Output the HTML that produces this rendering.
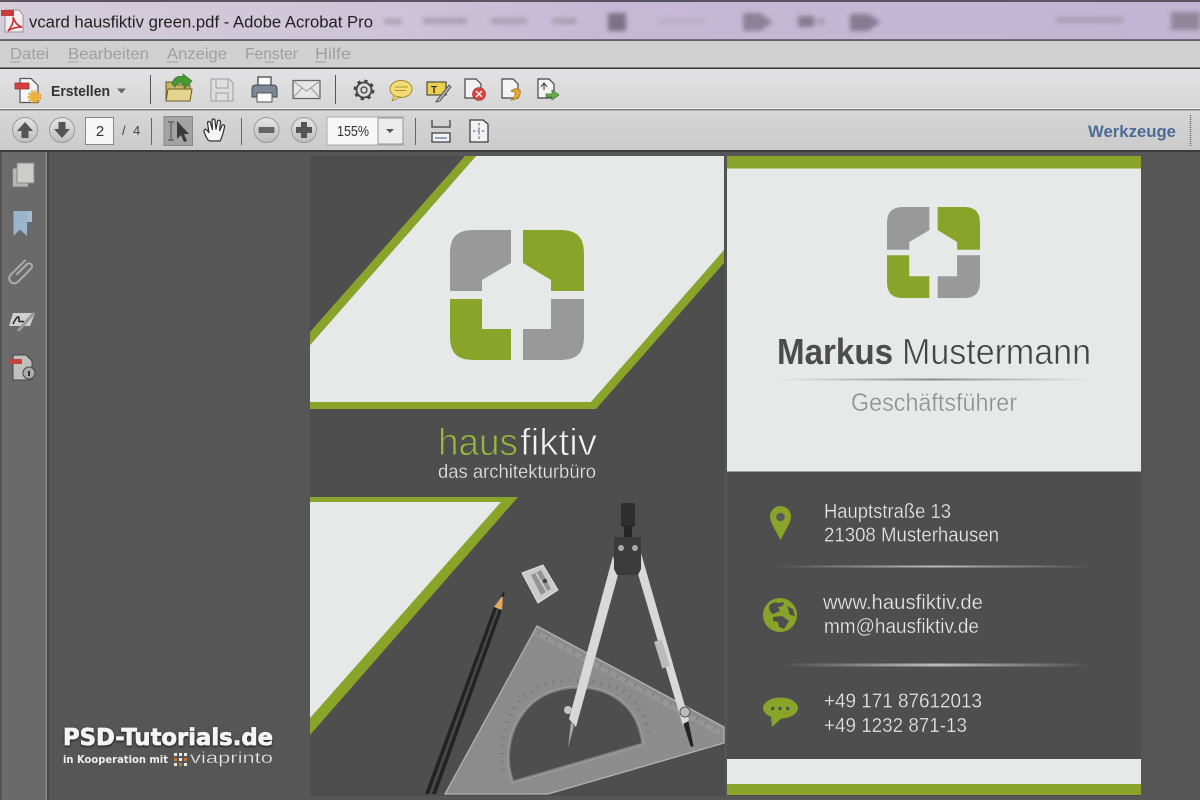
<!DOCTYPE html>
<html lang="de"><head><meta charset="utf-8"><title>vcard hausfiktiv green.pdf - Adobe Acrobat Pro</title>
<style>html,body{margin:0;padding:0;background:#565656;width:1200px;height:800px;overflow:hidden}svg{display:block}text{font-family:"Liberation Sans",sans-serif}</style></head><body>
<svg xmlns="http://www.w3.org/2000/svg" width="1200" height="800" viewBox="0 0 1200 800">
<defs>
<linearGradient id="tb" x1="0" x2="1" y1="0" y2="0"><stop offset="0" stop-color="#d3cdd8"/><stop offset=".3" stop-color="#cfc5d8"/><stop offset=".5" stop-color="#c6b9d6"/><stop offset="1" stop-color="#c2b4d4"/></linearGradient>
<linearGradient id="t1" x1="0" x2="0" y1="0" y2="1"><stop offset="0" stop-color="#e2e2e4"/><stop offset="1" stop-color="#d6d6d6"/></linearGradient>
<linearGradient id="t2" x1="0" x2="0" y1="0" y2="1"><stop offset="0" stop-color="#d6d6d6"/><stop offset="1" stop-color="#cbcbcb"/></linearGradient>
<linearGradient id="sepd" x1="0" x2="1" y1="0" y2="0"><stop offset="0" stop-color="#999" stop-opacity="0"/><stop offset=".5" stop-color="#8a8a8a"/><stop offset="1" stop-color="#999" stop-opacity="0"/></linearGradient>
<linearGradient id="sepl" x1="0" x2="1" y1="0" y2="0"><stop offset="0" stop-color="#bbb" stop-opacity="0"/><stop offset=".5" stop-color="#bdbdbd"/><stop offset="1" stop-color="#bbb" stop-opacity="0"/></linearGradient>
<linearGradient id="btn" x1="0" x2="0" y1="0" y2="1"><stop offset="0" stop-color="#e6e6e6"/><stop offset="1" stop-color="#bdbdbd"/></linearGradient>
<linearGradient id="sq" x1="0" x2="1" y1="0" y2="1"><stop offset="0" stop-color="#8a8a8a"/><stop offset="1" stop-color="#8e8e8e"/></linearGradient>
<filter id="b3" x="-30%" y="-60%" width="160%" height="220%"><feGaussianBlur stdDeviation="2.4"/></filter>
<filter id="s" x="-5%" y="-20%" width="110%" height="140%"><feDropShadow dx="0" dy="1" stdDeviation="1.2" flood-color="#111" flood-opacity=".9"/></filter>
<filter id="soft"><feGaussianBlur stdDeviation=".35"/></filter>
<g id="logo">
<path fill="#999" d="M61 0V33L32 50V61H0V24C0 7 7 0 24 0Z"/>
<path fill="#8aa429" d="M73 0V33L101 50V61H134V24C134 7 127 0 110 0Z"/>
<path fill="#8aa429" d="M0 69H32V99H61V130H24C7 130 0 123 0 106Z"/>
<path fill="#999" d="M73 99H101V69H134V106C134 123 127 130 110 130H73Z"/>
</g>
</defs>

<!-- chrome -->
<rect width="1200" height="800" fill="#565656"/>
<rect width="1200" height="39" fill="url(#tb)"/>
<rect width="1200" height="2" fill="#5b5360"/>
<g filter="url(#b3)" fill="#a89fb2">
<rect x="384" y="19" width="18" height="5"/><rect x="423" y="18" width="44" height="6"/><rect x="491" y="18" width="36" height="6"/><rect x="552" y="18" width="25" height="6"/>
<rect x="608" y="13" width="18" height="18" fill="#7a7285"/>
<rect x="658" y="19" width="48" height="5" fill="#b9afc6"/>
<path d="M743 13H760L773 22L760 31H743Z" fill="#8b8298"/>
<rect x="798" y="16" width="16" height="11" fill="#857c92"/><rect x="816" y="18" width="9" height="7" fill="#a89eb5"/>
<path d="M850 14H868L881 22L868 31H850Z" fill="#857c92"/>
<rect x="1056" y="17" width="67" height="6" fill="#a89db6"/><rect x="1171" y="12" width="29" height="18" fill="#8f8799"/>
</g>
<rect y="39" width="1200" height="1.500" fill="#6c6c78"/>
<rect y="41" width="1200" height="27" fill="#d0d0d0"/>
<rect y="67.500" width="1200" height="1.500" fill="#333"/>
<rect y="69" width="1200" height="39" fill="url(#t1)"/>
<rect y="108" width="1200" height="1" fill="#f4f4f4"/>
<rect y="109" width="1200" height="1.500" fill="#777"/>
<rect y="110.500" width="1200" height="1" fill="#eee"/>
<rect y="111" width="1200" height="39" fill="url(#t2)"/>
<rect y="150" width="1200" height="2" fill="#3c3c3c"/>

<!-- title -->
<g filter="url(#soft)">
<path d="M5 10H19L23 15V32H5Z" fill="#f1ecee" stroke="#9a8f98"/>
<rect x="1" y="10" width="13" height="6" fill="#c43a38"/>
<path d="M8 31C12 26 14 21 13 17C15 23 18 26 22 27C17 27 12 28 8 31Z" fill="none" stroke="#cc2d27" stroke-width="1.600"/>
</g>
<text x="29" y="27.500" font-size="17" fill="#222" textLength="344" lengthAdjust="spacingAndGlyphs">vcard hausfiktiv green.pdf - Adobe Acrobat Pro</text>

<!-- menu -->
<g font-size="16" fill="#9f9f9f">
<text x="10" y="59" textLength="39" lengthAdjust="spacingAndGlyphs">Datei</text>
<text x="68" y="59" textLength="81" lengthAdjust="spacingAndGlyphs">Bearbeiten</text>
<text x="167" y="59" textLength="60" lengthAdjust="spacingAndGlyphs">Anzeige</text>
<text x="245" y="59" textLength="53" lengthAdjust="spacingAndGlyphs">Fenster</text>
<text x="315" y="59" textLength="36" lengthAdjust="spacingAndGlyphs">Hilfe</text>
</g>
<g stroke="#9f9f9f" stroke-width="1"><path d="M10 62H20M68 62H78M167 62H178M265 62H274M315 62H326"/></g>

<!-- toolbar 1 -->
<g filter="url(#soft)">
<path d="M20 78.500H31L38 85.500V102.500H20Z" fill="#f4f4f4" stroke="#555" stroke-width="1.200"/>
<rect x="15" y="83" width="14" height="6" fill="#d9403c" stroke="#8c2a28" stroke-width=".7"/>
<circle cx="34.500" cy="97" r="5" fill="#eab23e"/>
<circle cx="34.500" cy="97" r="6" fill="none" stroke="#d19a2b" stroke-width="1.600" stroke-dasharray="2 1.500"/>
</g>
<text x="51" y="96" font-size="15" font-weight="bold" fill="#333" textLength="59" lengthAdjust="spacingAndGlyphs">Erstellen</text>
<path d="M117 88.500H126L121.500 93.500Z" fill="#666"/>
<rect x="150" y="75" width="1" height="29" fill="#555"/>
<g filter="url(#soft)">
<path d="M166 82H175L178 85H190V101H166Z" fill="#c9b56a" stroke="#6a5a25"/>
<path d="M166 101L168 89H192L190 101Z" fill="#e4d48e" stroke="#6a5a25"/>
<path d="M172 84Q174 75 183 76.500V74L192 81L184 89V84.500Q178 81 175 87Z" fill="#4a9a33" stroke="#2f6d20" stroke-width=".6"/>
<path d="M211 79H229L233 83V101H211Z" fill="#dedede" stroke="#aaa" stroke-width="1.300"/>
<path d="M216 79V88H228V79M216 101V93H228V101" fill="none" stroke="#aaa" stroke-width="1.200"/>
<rect x="258" y="77" width="13" height="9" fill="#fafafa" stroke="#555" stroke-width="1.400"/>
<path d="M256 85H273Q277 85 277 89V97H272V93H257V97H252V89Q252 85 256 85Z" fill="#7b8896" stroke="#3f4954"/>
<rect x="257" y="93" width="15" height="9" fill="#fafafa" stroke="#555"/>
<rect x="293" y="80.500" width="27" height="18" fill="#e6e6e6" stroke="#666" stroke-width="1.300"/>
<path d="M293 81L306.500 91L320 81M293 98L302 88M320 98L311 88" fill="none" stroke="#999"/>
</g>
<rect x="335" y="75" width="1" height="29" fill="#555"/>
<g filter="url(#soft)">
<circle cx="364" cy="90" r="7.500" fill="none" stroke="#444" stroke-width="1.800"/>
<circle cx="364" cy="90" r="9.300" fill="none" stroke="#444" stroke-width="2.200" stroke-dasharray="3.400 3.900"/>
<circle cx="364" cy="90" r="3" fill="none" stroke="#444" stroke-width="1.300"/>
<ellipse cx="401" cy="89" rx="11" ry="8.500" fill="#f3dc74" stroke="#9e8a2a"/>
<path d="M394 96L392 101L400 97Z" fill="#f3dc74" stroke="#9e8a2a" stroke-width=".8"/>
<path d="M395 87H408M395 90.500H406" stroke="#b09628"/>
<rect x="427" y="82" width="19" height="13" fill="#eccf4e" stroke="#333"/>
<text x="431" y="93" font-size="10" font-weight="bold" fill="#333">T</text>
<path d="M437 100L449 85L451 87L440 101L436 102Z" fill="#aab0b5" stroke="#444" stroke-width=".8"/>
<path d="M465 79H476L481 84V98H465Z" fill="#f3f3f3" stroke="#444" stroke-width="1.200"/>
<circle cx="479" cy="94" r="6.500" fill="#d9433f" stroke="#8c2a28" stroke-width=".6"/>
<path d="M476 91L482 97M482 91L476 97" stroke="#fff" stroke-width="1.300"/>
<path d="M502 79H513L518 84V98H502Z" fill="#f3f3f3" stroke="#444" stroke-width="1.200"/>
<path d="M511 100Q522 99 520 90Q515 87 511 91L515 92Q516 96 511 100Z" fill="#e5a832" stroke="#a17013" stroke-width=".7"/>
<path d="M538 79H549L554 84V98H538Z" fill="#f3f3f3" stroke="#444" stroke-width="1.200"/>
<path d="M544 84V90M541 87L544 83L547 87" stroke="#333" fill="none"/>
<path d="M546 94H552V90L559 95L552 100V97H546Z" fill="#69ab4a" stroke="#3c7a2a" stroke-width=".7"/>
</g>

<!-- toolbar 2 -->
<g filter="url(#soft)">
<circle cx="25" cy="130" r="12.500" fill="url(#btn)" stroke="#999"/>
<path d="M25 122L33 131H28.500V138H21.500V131H17Z" fill="#555"/>
<circle cx="62" cy="130" r="12.500" fill="url(#btn)" stroke="#999"/>
<path d="M62 138L54 129H58.500V122H65.500V129H70Z" fill="#555"/>
</g>
<rect x="85.500" y="117.500" width="28" height="27" fill="#f7f7f7" stroke="#888"/>
<text x="100" y="136" font-size="15" fill="#333" text-anchor="middle">2</text>
<text x="122" y="135" font-size="13" fill="#444">/</text>
<text x="133" y="135" font-size="13" fill="#444">4</text>
<rect x="151" y="118" width="1" height="27" fill="#666"/>
<rect x="164" y="116.500" width="28.500" height="29" fill="#a3a3a3" stroke="#8a8a8a"/>
<path d="M168 122H174M168 140H174M171 122V140" stroke="#666" stroke-width="1.400" fill="none"/>
<path d="M177 121V139L181 135L184 142L187 141L184 134H189Z" fill="#3a3a3a"/>
<g filter="url(#soft)"><path d="M208 140C205 135 203 131 204.500 129.500C206 128.500 208 131 209 133L207.500 123C207.500 121 210 121 210.500 123L212.500 130L212 120.500C212 118.500 215 118.500 215 120.500L216 129.500L217.500 121.500C218 119.500 220.500 120 220.500 122L219.500 131L222 125.500C223 124 225 125 224.500 127C223.500 132 222.500 137 220 141H210Z" fill="#f5f5f5" stroke="#333" stroke-width="1.200"/></g>
<rect x="241" y="118" width="1" height="27" fill="#666"/>
<g filter="url(#soft)">
<circle cx="266.500" cy="130" r="12.500" fill="url(#btn)" stroke="#999"/>
<rect x="258.500" y="127" width="16" height="6" rx="1" fill="#666"/>
<circle cx="304" cy="130" r="12.500" fill="url(#btn)" stroke="#999"/>
<path d="M296 127H301V122H307V127H312V133H307V138H301V133H296Z" fill="#555"/>
</g>
<rect x="327" y="117" width="76" height="28" fill="#f7f7f7" stroke="#aaa"/>
<rect x="378" y="118" width="25" height="26" fill="#ececec" stroke="#999"/>
<text x="337" y="136" font-size="15" fill="#333" textLength="32" lengthAdjust="spacingAndGlyphs">155%</text>
<path d="M386 129H394L390 133Z" fill="#555"/>
<rect x="415" y="118" width="1" height="27" fill="#666"/>
<g fill="none" stroke="#3f3f3f" stroke-width="1.300">
<path d="M432 120V127H450V120"/><path d="M432 142V133H450V142Z" fill="#f2f2f2"/><path d="M435 138H447" stroke="#5878a0"/>
<path d="M470 120H483L488 124V142H470Z" fill="#f2f2f2"/><path d="M479 123V139M473 131H485" stroke="#6a7f9a" stroke-dasharray="2.500 2"/>
</g>
<text x="1088" y="137" font-size="17" font-weight="bold" fill="#4c6b95" textLength="88" lengthAdjust="spacingAndGlyphs">Werkzeuge</text>
<path d="M1190.500 115V146" stroke="#666" stroke-dasharray="1 1" stroke-width="1.500"/>

<!-- sidebar -->
<rect y="152" width="47" height="648" fill="#6a6a6a"/>
<rect y="152" width="2" height="648" fill="#545454"/>
<rect x="45.500" y="152" width="1.500" height="648" fill="#858585"/>
<rect x="47" y="152" width="2" height="648" fill="#474747"/>
<g filter="url(#soft)">
<rect x="12.500" y="168" width="16" height="19" fill="#b7b7b3" stroke="#777"/>
<path d="M17 163H34V183H17Z" fill="#cdcdc9" stroke="#888"/>
<path d="M13.500 211H27V236L20 229.500L13.500 236Z" fill="#9bb5cc"/><rect x="27" y="211" width="5" height="11" fill="#a9bacb"/>
<g transform="rotate(-45 22 272)"><path d="M16 270H31A3 3 0 0 1 31 276H12A5 5 0 0 1 12 266H33" fill="none" stroke="#adadad" stroke-width="2"/></g>
<path d="M13 313H35L30 326H9Z" fill="#cfcfcf"/><path d="M13 324C16 318 19 314 19 319C18 324 22 320 24 322" fill="none" stroke="#222" stroke-width="1.500"/><path d="M18 331L34 313" stroke="#9a9a9a" stroke-width="3"/>
<path d="M13 355H26L32 361V380H13Z" fill="#c0c0bc" stroke="#444"/>
<rect x="9" y="359" width="13" height="5" fill="#c8403e"/>
<circle cx="29" cy="373" r="6" fill="#aaa" stroke="#444"/><rect x="28" y="371" width="2" height="5" fill="#333"/>
</g>

<!-- left page -->
<rect x="310" y="156" width="415" height="640" fill="#4e4e4e"/>
<polygon points="476,156 724,156 724,252 591,402 310,402 310,345" fill="#e7e8e8"/>
<polygon points="465,156 476,156 310,345 310,332" fill="#8aa429"/>
<polygon points="724,250 591,402 310,402 310,409 596,409 724,263" fill="#8aa429"/>
<use href="#logo" transform="translate(450,230)"/>
<text x="438" y="455" font-size="38" fill="#9cb43a" stroke="#4e4e4e" stroke-width=".9" textLength="80" lengthAdjust="spacingAndGlyphs">haus</text>
<text x="520" y="455" font-size="38" fill="#f4f4f4" stroke="#4e4e4e" stroke-width=".9" textLength="77" lengthAdjust="spacingAndGlyphs">fiktiv</text>
<text x="438" y="478" font-size="19.500" fill="#e6e6e6" stroke="#4e4e4e" stroke-width=".3" textLength="158" lengthAdjust="spacingAndGlyphs">das architekturbüro</text>
<polygon points="310,497 518,497 310,735" fill="#8aa429"/>
<polygon points="310,502 501,502 310,718" fill="#e7e8e8"/>

<!-- set square -->
<g filter="url(#soft)">
<path fill-rule="evenodd" d="M537 626L724 727V743L548 794H445ZM513 782L643 744C640 725 634 709 615 697C590 681 550 685 530 705C510 724 503 757 513 782Z" fill="url(#sq)"/>
<path d="M537 626L724 727V743L548 794H445Z" fill="none" stroke="#b2b2b2" stroke-width="1.300"/>
<path d="M535 632L720 733" stroke="#a8a8a8" stroke-width="5" opacity=".35"/>
<path d="M538 633L716 729" stroke="#666" stroke-width="4" stroke-dasharray="1 9" opacity=".6"/>
<path d="M513 782L643 744C640 725 634 709 615 697C590 681 550 685 530 705C510 724 503 757 513 782Z" fill="none" stroke="#a8a8a8" stroke-width="3" opacity=".55"/>
<path d="M503 770C498 735 510 705 530 692C555 675 595 678 622 690C640 702 648 725 650 738" fill="none" stroke="#666" stroke-width="4" stroke-dasharray="1 7" opacity=".65"/>
<!-- pencil -->
<polygon points="494,607 502,610 436,794 425,794" fill="#222"/>
<polygon points="497,608 499,609 432,794 429,794" fill="#4a4a4a"/>
<polygon points="494,607 503,595 502,610" fill="#e4a75e"/>
<line x1="502" y1="597" x2="504" y2="592" stroke="#222" stroke-width="2"/>
<!-- sharpener -->
<polygon points="522,573 543,565 558,590 538,603" fill="#cacaca" stroke="#e0e0e0"/>
<polygon points="531,575 541,570 551,589 541,595" fill="#929292"/>
<line x1="536" y1="573" x2="547" y2="592" stroke="#c8c8c8" stroke-width="2"/>
<circle cx="545" cy="581" r="2.200" fill="#444"/>
<!-- compass -->
<polygon points="613,556 618,575 576,727 569,719" fill="#d8d8d8"/>
<polygon points="641,553 638,574 683,726 689,720" fill="#d8d8d8"/>
<path d="M571 722L568 748L574 726Z" fill="#aaa"/>
<path d="M684 724L691 746L693 746L688 722Z" fill="#222" stroke="#222"/>
<circle cx="568" cy="710" r="4" fill="#c4c4c4"/>
<rect x="658" y="640" width="8" height="28" fill="#bbb" transform="rotate(-17 662 654)"/>
<circle cx="685" cy="712" r="5" fill="#bcbcbc" stroke="#555"/>
<rect x="621" y="503" width="14" height="24" rx="2" fill="#2f2f2f"/>
<rect x="624" y="525" width="8" height="13" fill="#262626"/>
<path d="M614 537H641V569L638 575H617L614 569Z" fill="#3a3a3a"/>
<circle cx="621" cy="548" r="3" fill="#aaa"/><circle cx="635" cy="548" r="3" fill="#aaa"/>
</g>

<!-- right page -->
<rect x="727" y="156" width="414" height="640" fill="#4e4e4e"/>
<rect x="727" y="156" width="414" height="12.500" fill="#8aa429"/>
<rect x="727" y="168.500" width="414" height="303" fill="#e7e8e8"/>
<use href="#logo" transform="translate(887,207) scale(.694 .7)"/>
<text x="777" y="364" font-size="36" font-weight="bold" fill="#4c4c4c" textLength="116" lengthAdjust="spacingAndGlyphs">Markus</text>
<text x="902" y="364" font-size="36" fill="#444" stroke="#e7e8e8" stroke-width=".6" textLength="189" lengthAdjust="spacingAndGlyphs">Mustermann</text>
<rect x="775" y="378.500" width="318" height="2" fill="url(#sepd)"/>
<text x="851" y="411" font-size="25" fill="#8f8f8f" stroke="#e7e8e8" stroke-width=".35" textLength="166" lengthAdjust="spacingAndGlyphs">Geschäftsführer</text>

<g font-size="20.500" fill="#e8e8e8" stroke="#4e4e4e" stroke-width=".3">
<text x="824" y="518" textLength="127" lengthAdjust="spacingAndGlyphs">Hauptstraße 13</text>
<text x="824" y="541.500" textLength="175" lengthAdjust="spacingAndGlyphs">21308 Musterhausen</text>
<text x="823" y="609" textLength="160" lengthAdjust="spacingAndGlyphs">www.hausfiktiv.de</text>
<text x="824" y="633" textLength="155" lengthAdjust="spacingAndGlyphs">mm@hausfiktiv.de</text>
<text x="824" y="707.500" textLength="158" lengthAdjust="spacingAndGlyphs">+49 171 87612013</text>
<text x="824" y="732" textLength="143" lengthAdjust="spacingAndGlyphs">+49 1232 871-13</text>
</g>
<rect x="775" y="565.500" width="318" height="2" fill="url(#sepl)"/>
<rect x="782" y="663.500" width="310" height="3" fill="url(#sepl)"/>

<!-- pin -->
<path d="M780.500 540L772.500 525Q770 520 770 516.500A10.500 10.500 0 0 1 791 516.500Q791 520 788.500 525Z" fill="#8aa429"/>
<circle cx="780.500" cy="517" r="4.300" fill="#5a5a5a"/>
<!-- globe -->
<circle cx="780" cy="615" r="17" fill="#8aa429"/>
<path d="M769 606Q773 601 778 603L784 602L783 606L778 607L780 611L773 614Q769 612 769 606ZM787 606L793 609L795 616L790 615ZM773 617L782 616L789 621L784 629L779 627L778 622L773 621Z" fill="#4e4e4e"/>
<!-- chat -->
<ellipse cx="780.500" cy="708" rx="17.500" ry="10.500" fill="#8aa429"/>
<path d="M771 716L772 727L783 717Z" fill="#8aa429"/>
<circle cx="772.700" cy="708.500" r="1.700" fill="#4e4e4e"/><circle cx="780" cy="708.500" r="1.700" fill="#4e4e4e"/><circle cx="787.700" cy="708.500" r="1.700" fill="#4e4e4e"/>
<rect x="727" y="759" width="414" height="25" fill="#e7e8e8"/>
<rect x="727" y="784" width="414" height="11" fill="#8aa429"/>

<!-- watermark -->
<text x="63" y="745" font-size="23" font-weight="bold" fill="#f4f4f4" stroke="#f4f4f4" stroke-width=".7" filter="url(#s)" style="font-family:'DejaVu Sans',sans-serif" textLength="210" lengthAdjust="spacingAndGlyphs">PSD-Tutorials.de</text>
<text x="63" y="763" font-size="10.500" font-weight="bold" fill="#eee" style="font-family:'DejaVu Sans',sans-serif" textLength="105" lengthAdjust="spacingAndGlyphs">in Kooperation mit</text>
<g fill="#e8e8e8"><rect x="174" y="753" width="3" height="3"/><rect x="179" y="753" width="3" height="3"/><rect x="184" y="753" width="3" height="3"/><rect x="174" y="758" width="3" height="3" fill="#c9762b"/><rect x="179" y="758" width="3" height="3"/><rect x="184" y="758" width="3" height="3" fill="#c9762b"/><rect x="174" y="763" width="3" height="3"/><rect x="179" y="763" width="3" height="3" fill="#c9762b"/><rect x="184" y="763" width="3" height="3"/></g>
<text x="190" y="763" font-size="16" fill="#e8e8e8" stroke="#565656" stroke-width=".3" textLength="83" lengthAdjust="spacingAndGlyphs">viaprinto</text>
</svg>
</body></html>
